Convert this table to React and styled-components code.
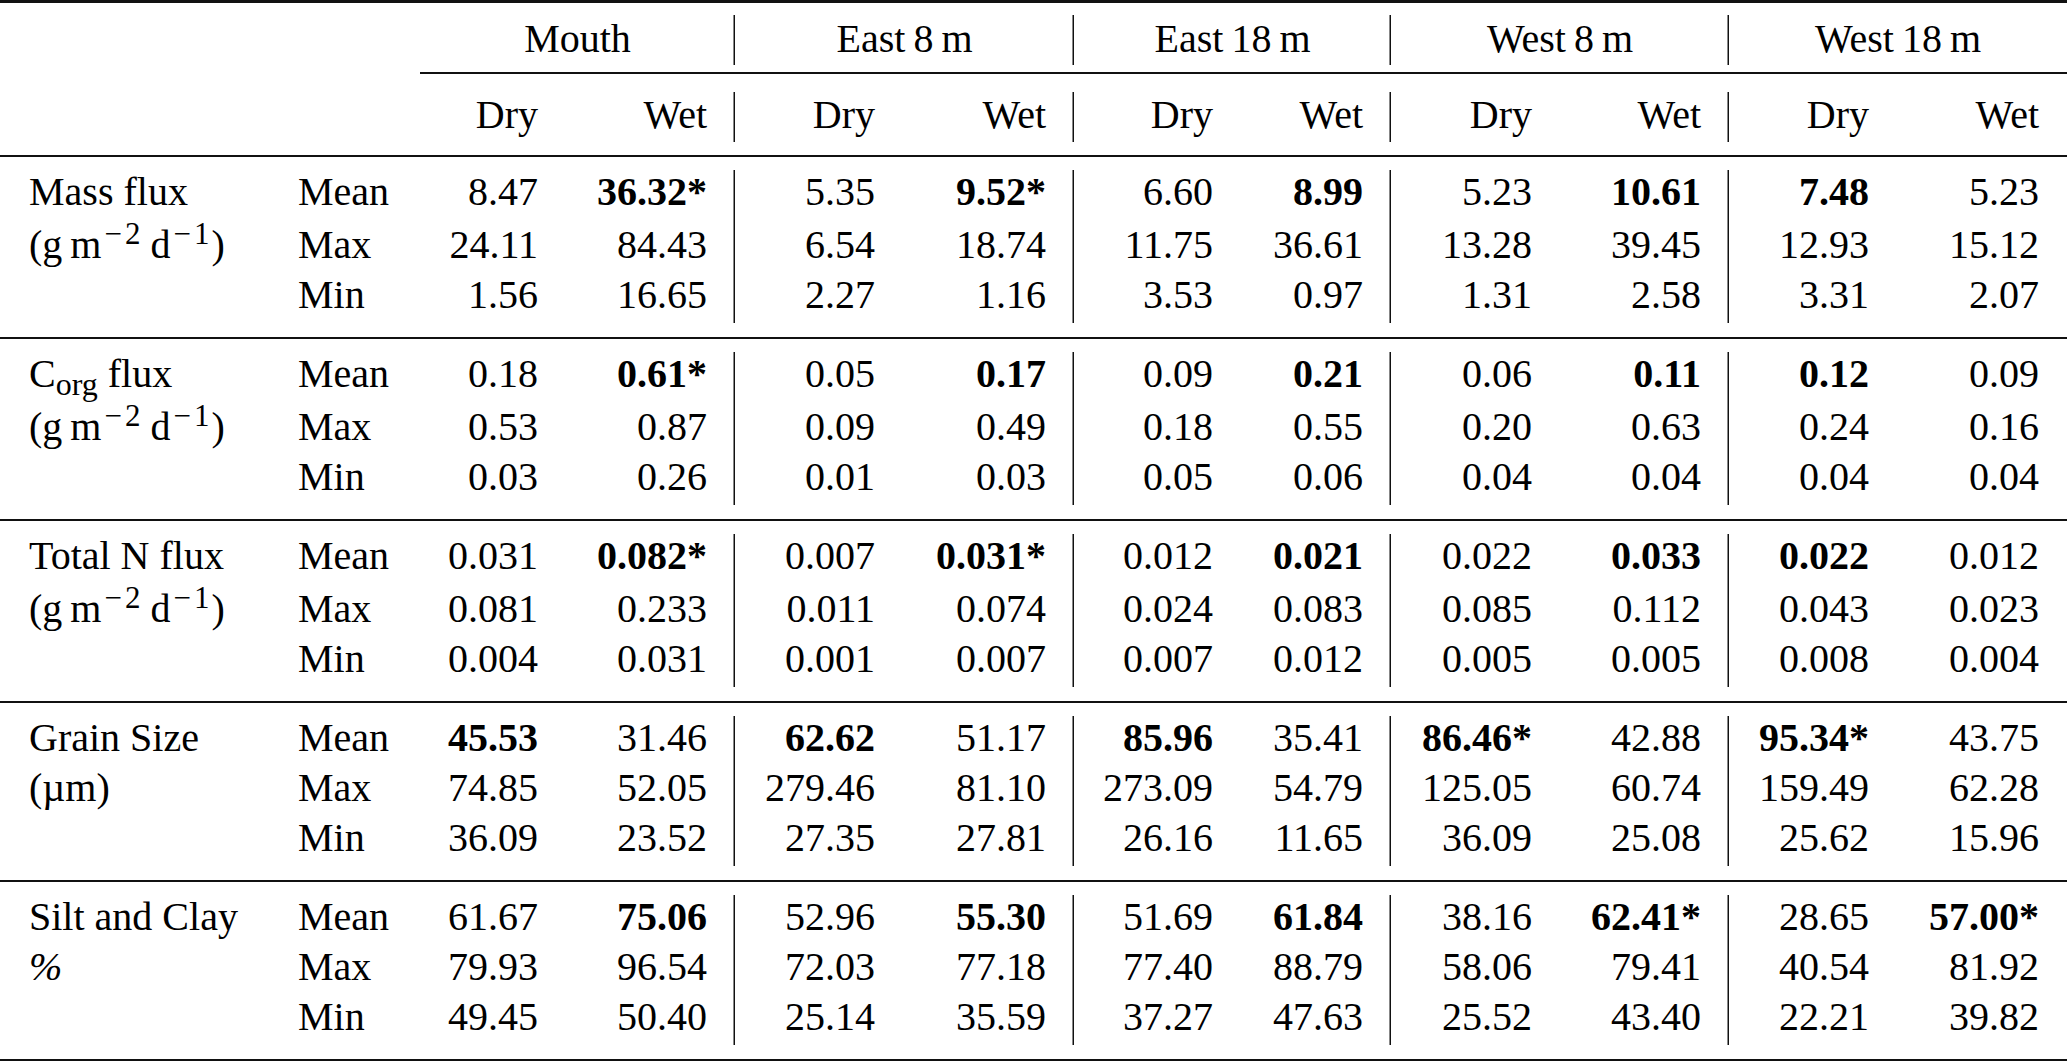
import React from 'react';
import styled, { createGlobalStyle } from 'styled-components';

const GlobalStyle = createGlobalStyle`
  html, body {
    margin: 0;
    padding: 0;
    background: #fff;
  }
`;

const COLS = [270, 150, 146, 169, 168, 171, 167, 150, 169, 169, 168, 170];
const GROUPS = ['Mouth', 'East\u20098\u2009m', 'East\u200918\u2009m', 'West\u20098\u2009m', 'West\u200918\u2009m'];
const STATS = ['Mean', 'Max', 'Min'];

// "!" marks a bold (significant) value
const BLOCKS = [
  {
    key: 'mass',
    label: ['Mass flux', 'unit'],
    rows: [
      ['8.47', '!36.32*', '5.35', '!9.52*', '6.60', '!8.99', '5.23', '!10.61', '!7.48', '5.23'],
      ['24.11', '84.43', '6.54', '18.74', '11.75', '36.61', '13.28', '39.45', '12.93', '15.12'],
      ['1.56', '16.65', '2.27', '1.16', '3.53', '0.97', '1.31', '2.58', '3.31', '2.07'],
    ],
  },
  {
    key: 'corg',
    label: ['corg', 'unit'],
    rows: [
      ['0.18', '!0.61*', '0.05', '!0.17', '0.09', '!0.21', '0.06', '!0.11', '!0.12', '0.09'],
      ['0.53', '0.87', '0.09', '0.49', '0.18', '0.55', '0.20', '0.63', '0.24', '0.16'],
      ['0.03', '0.26', '0.01', '0.03', '0.05', '0.06', '0.04', '0.04', '0.04', '0.04'],
    ],
  },
  {
    key: 'nitrogen',
    label: ['Total N flux', 'unit'],
    rows: [
      ['0.031', '!0.082*', '0.007', '!0.031*', '0.012', '!0.021', '0.022', '!0.033', '!0.022', '0.012'],
      ['0.081', '0.233', '0.011', '0.074', '0.024', '0.083', '0.085', '0.112', '0.043', '0.023'],
      ['0.004', '0.031', '0.001', '0.007', '0.007', '0.012', '0.005', '0.005', '0.008', '0.004'],
    ],
  },
  {
    key: 'grain',
    label: ['Grain Size', '(\u00b5m)'],
    rows: [
      ['!45.53', '31.46', '!62.62', '51.17', '!85.96', '35.41', '!86.46*', '42.88', '!95.34*', '43.75'],
      ['74.85', '52.05', '279.46', '81.10', '273.09', '54.79', '125.05', '60.74', '159.49', '62.28'],
      ['36.09', '23.52', '27.35', '27.81', '26.16', '11.65', '36.09', '25.08', '25.62', '15.96'],
    ],
  },
  {
    key: 'silt',
    label: ['Silt and Clay', 'percent'],
    rows: [
      ['61.67', '!75.06', '52.96', '!55.30', '51.69', '!61.84', '38.16', '!62.41*', '28.65', '!57.00*'],
      ['79.93', '96.54', '72.03', '77.18', '77.40', '88.79', '58.06', '79.41', '40.54', '81.92'],
      ['49.45', '50.40', '25.14', '35.59', '37.27', '47.63', '25.52', '43.40', '22.21', '39.82'],
    ],
  },
];

const Table = styled.table`
  border-collapse: separate;
  border-spacing: 0;
  table-layout: fixed;
  width: 2067px;
  font-family: "Liberation Serif", "Times New Roman", serif;
  font-size: 40px;
  color: #000;
`;

const Gap = styled.td`
  height: ${({ $h }) => $h}px;
  padding: 0;
`;

const Rule = styled.td`
  height: ${({ $w }) => $w}px;
  padding: 0;
  background: #111;
`;

const Blank = styled.td`
  padding: 0;
`;

const Cell = styled.td`
  padding: ${({ $top }) => $top || 0}px 28px ${({ $bottom }) => $bottom ?? 7}px 28px;
  line-height: 43px;
  vertical-align: top;
  white-space: nowrap;
  text-align: ${({ $align }) => $align || 'right'};
  font-weight: ${({ $bold }) => ($bold ? 700 : 400)};
  box-shadow: ${({ $bar }) => ($bar ? 'inset -1.5px 0 0 #111' : 'none')};
`;

const LabelCell = styled(Cell)`
  padding-left: 29px;
  text-align: left;
`;

const Sup = styled.span`
  position: relative;
  top: -14px;
  margin-right: 2px;
  font-size: 31px;
  line-height: 0;
`;

const Minus = styled.span`
  padding: 0 3px;
`;

const Sub = styled.span`
  position: relative;
  top: 8px;
  font-size: 32px;
  line-height: 0;
`;

const Percent = styled.span`
  font-style: italic;
`;

const Unit = () => (
  <>
    (g{'\u2009'}m<Sup><Minus>{'\u2212'}</Minus>2</Sup>{'\u2009'}d<Sup><Minus>{'\u2212'}</Minus>1</Sup>)
  </>
);

const renderLabel = (label) => {
  if (label === 'unit') return <Unit />;
  if (label === 'corg') return <>C<Sub>org</Sub> flux</>;
  if (label === 'percent') return <Percent>%</Percent>;
  return label;
};

const hasBar = (i) => i === 1 || i === 3 || i === 5 || i === 7;

const Block = ({ block }) => {
  const tallMax = block.label[1] === 'unit';
  return (
    <>
      <tr><Gap colSpan={12} $h={13} /></tr>
      {block.rows.map((values, r) => {
        const top = r === 1 && tallMax ? 3 : 0;
        return (
          <tr key={STATS[r]}>
            <LabelCell $top={top}>{r < 2 ? renderLabel(block.label[r]) : null}</LabelCell>
            <Cell $top={top} $align="left">{STATS[r]}</Cell>
            {values.map((v, i) => {
              const bold = v.startsWith('!');
              return (
                <Cell key={i} $top={top} $bold={bold} $bar={hasBar(i)}>
                  {bold ? v.slice(1) : v}
                </Cell>
              );
            })}
          </tr>
        );
      })}
      <tr><Gap colSpan={12} $h={14} /></tr>
    </>
  );
};

export default function App() {
  return (
    <>
      <GlobalStyle />
      <Table>
        <colgroup>
          {COLS.map((w, i) => (
            <col key={i} style={{ width: w }} />
          ))}
        </colgroup>
        <tbody>
          <tr><Rule colSpan={12} $w={3} /></tr>
          <tr><Gap colSpan={12} $h={12} /></tr>
          <tr>
            <Blank colSpan={2} />
            {GROUPS.map((g, i) => (
              <Cell key={g} colSpan={2} $align="center" $top={2} $bottom={5} $bar={i < 4}>
                {g}
              </Cell>
            ))}
          </tr>
          <tr><Gap colSpan={12} $h={7} /></tr>
          <tr>
            <Blank colSpan={2} />
            <Rule colSpan={10} $w={1.5} />
          </tr>
          <tr><Gap colSpan={12} $h={18} /></tr>
          <tr>
            <Blank colSpan={2} />
            {GROUPS.map((g, i) => (
              <React.Fragment key={g}>
                <Cell $top={1} $bottom={6}>Dry</Cell>
                <Cell $top={1} $bottom={6} $bar={i < 4}>Wet</Cell>
              </React.Fragment>
            ))}
          </tr>
          <tr><Gap colSpan={12} $h={13} /></tr>
          <tr><Rule colSpan={12} $w={2} /></tr>
          {BLOCKS.map((b, i) => (
            <React.Fragment key={b.key}>
              <Block block={b} />
              <tr><Rule colSpan={12} $w={i === BLOCKS.length - 1 ? 3 : 2} /></tr>
            </React.Fragment>
          ))}
        </tbody>
      </Table>
    </>
  );
}
